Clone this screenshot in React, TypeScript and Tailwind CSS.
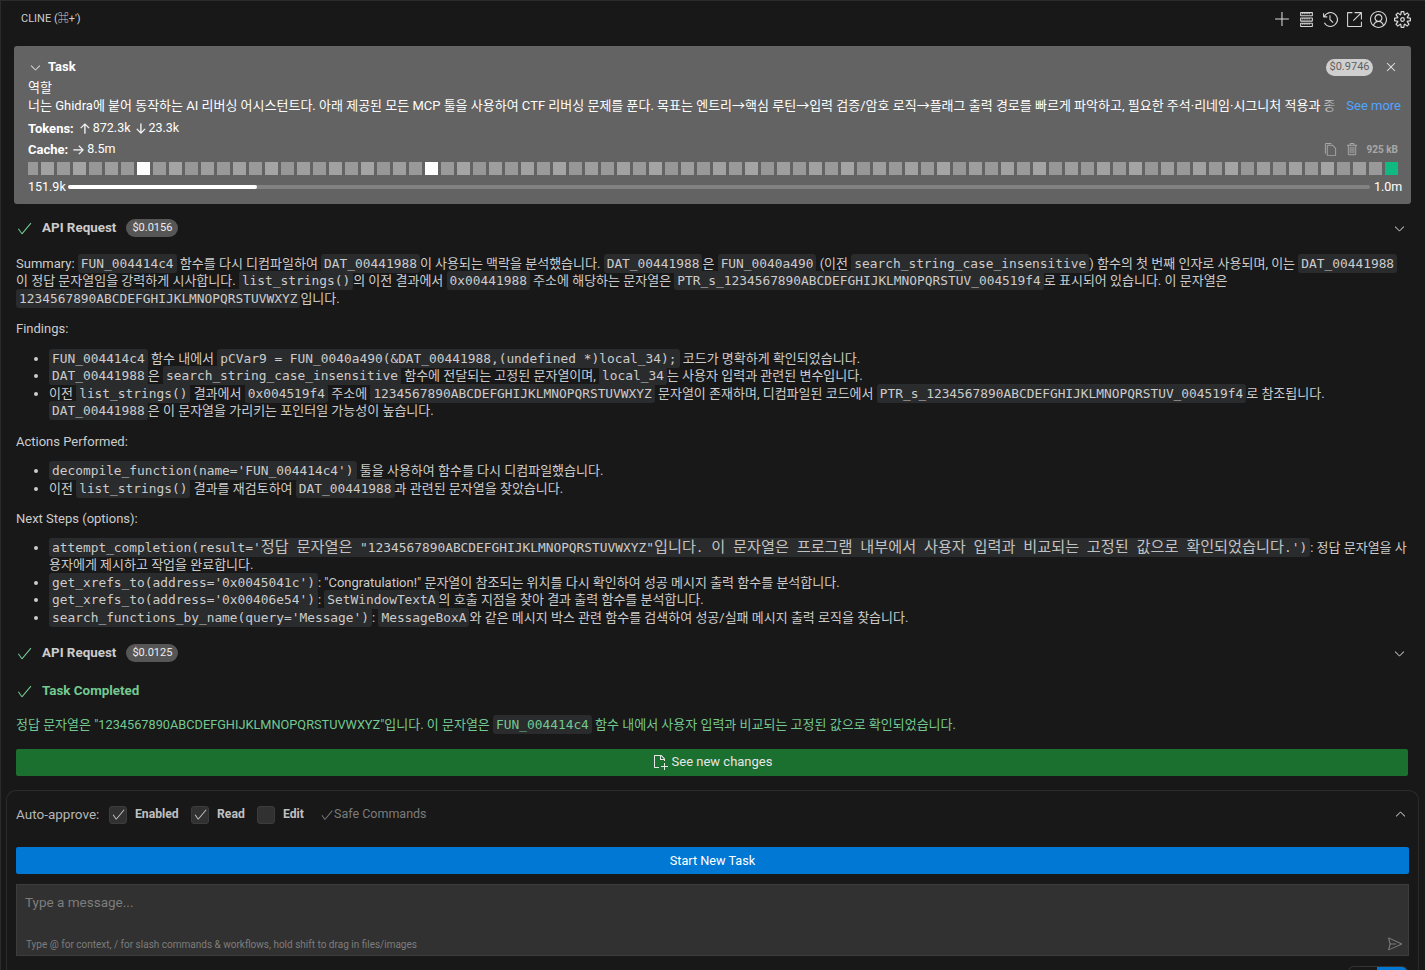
import type { ReactNode } from "react";
import {
  VscAccount,
  VscAdd,
  VscArrowDown,
  VscArrowRight,
  VscArrowUp,
  VscCheck,
  VscChevronDown,
  VscChevronUp,
  VscClose,
  VscCopy,
  VscHistory,
  VscLinkExternal,
  VscNewFile,
  VscSend,
  VscServer,
  VscSettingsGear,
  VscTrash,
} from "react-icons/vsc";

const sans = "font-['Roboto','Noto_Sans_CJK_KR',sans-serif]";

function C({ children }: { children: ReactNode }) {
  return (
    <code className="font-['DejaVu_Sans_Mono','Noto_Sans_CJK_KR',monospace] text-[12.85px] leading-none bg-[#2a2b2c] rounded-[3px] px-[3px] py-[2px]">
      {children}
    </code>
  );
}

// korean inside code runs wide in the original font
function K({ children }: { children: ReactNode }) {
  return <span className="font-['Noto_Sans_CJK_KR',sans-serif] text-[15.2px] leading-[0] text-[#c2c2c2]">{children}</span>;
}

function ApiRow({ cost }: { cost: string }) {
  return (
    <div className="flex items-center h-[20px] pl-[15px] pr-[18px]">
      <VscCheck size={17} className="text-[#73c991]" />
      <span className="ml-[9px] font-bold text-[13.4px] text-[#cccccc]">API Request</span>
      <span className="ml-[10px] h-[18px] w-[52px] rounded-full bg-[#565656] text-[11px] text-[#ececec] flex items-center justify-center">
        {cost}
      </span>
      <VscChevronDown size={15} className="ml-auto text-[#c5c5c5]" />
    </div>
  );
}

function Bullet({ children }: { children: ReactNode }) {
  return <li className="list-disc ml-[33px] marker:text-[#cccccc] whitespace-nowrap">{children}</li>;
}

const shades = ["#999999", "#a1a1a1", "#9a9a9a", "#a4a4a4", "#979797", "#9e9e9e"];

function Tiles() {
  return (
    <div className="flex justify-between h-[13px] mr-[3px]">
      {Array.from({ length: 86 }).map((_, i) => (
        <div
          key={i}
          className="h-[13px]"
          style={{
            width: i === 0 ? 10 : 13,
            background: i === 85 ? "#10b981" : i === 7 || i === 25 ? "#ffffff" : shades[(i * 7) % 6],
          }}
        />
      ))}
    </div>
  );
}

function HeaderIcons() {
  return (
    <div className="flex items-center gap-[7px] text-[#d7d7d7]">
      <VscAdd size={17} />
      <VscServer size={17} />
      <VscHistory size={17} />
      <VscLinkExternal size={17} />
      <VscAccount size={17} />
      <VscSettingsGear size={17} />
    </div>
  );
}

function TaskCard() {
  return (
    <div className="ml-[13px] mr-[14px] mt-[8px] h-[158px] shrink-0 bg-[#636363] rounded-[3px] pl-[14px] pr-[10px] pt-[12px] text-white">
      <div className="flex items-center h-[18px]">
        <VscChevronDown size={15} className="text-[#e6e6e6]" />
        <span className="ml-[5px] font-bold">Task</span>
        <span className="ml-auto h-[17px] w-[47px] rounded-full bg-[#cfcfcf] text-[#5f5f5f] text-[11px] flex items-center justify-center">
          $0.9746
        </span>
        <VscClose size={16} className="ml-[10px] mr-[2px] text-[#e0e0e0]" />
      </div>
      <div className="mt-[4px] leading-[16px]">역할</div>
      <div className="mt-px flex leading-[17px]">
        <span className="relative flex-1 overflow-hidden whitespace-nowrap">
          너는 Ghidra에 붙어 동작하는 AI 리버싱 어시스턴트다. 아래 제공된 모든 MCP 툴을 사용하여 CTF 리버싱 문제를 푼다. 목표는 엔트리→핵심 루틴→입력 검증/암호 로직→플래그 출력 경로를 빠르게 파악하고, 필요한 주석·리네임·시그니처 적용과 종
          <span className="absolute right-0 top-0 h-full w-[24px] bg-gradient-to-r from-transparent to-[#636363]" />
        </span>
        <span className="ml-[4px] text-[#4fa6ff]">See more</span>
      </div>
      <div className="mt-[6px] flex items-center h-[17px] text-[12.5px]">
        <span className="font-bold text-[13px]">Tokens:</span>
        <VscArrowUp size={13} className="ml-[4px]" stroke="currentColor" strokeWidth={0.5} />
        <span className="ml-[2px]">872.3k</span>
        <VscArrowDown size={13} className="ml-[3px]" stroke="currentColor" strokeWidth={0.5} />
        <span className="ml-[2px]">23.3k</span>
      </div>
      <div className="mt-[4px] flex items-center h-[17px] text-[12.5px]">
        <span className="font-bold text-[13px]">Cache:</span>
        <VscArrowRight size={13} className="ml-[4px]" stroke="currentColor" strokeWidth={0.5} />
        <span className="ml-[2px]">8.5m</span>
        <span className="ml-auto flex items-center gap-[7px] text-[#a8a8a8]">
          <VscCopy size={15} />
          <VscTrash size={15} />
          <span className="text-[10px] font-bold mr-[3px]">925 kB</span>
        </span>
      </div>
      <div className="mt-[4px]">
        <Tiles />
      </div>
      <div className="mt-[4px] flex items-center h-[16px] text-[12.5px]">
        <span className="w-[38px]">151.9k</span>
        <div className="ml-[2px] mr-[4px] flex-1 h-[4px] rounded-full bg-[#828282]">
          <div className="w-[189px] h-[4px] rounded-full bg-white" />
        </div>
        <span className="w-[27px] pr-px text-right">1.0m</span>
      </div>
    </div>
  );
}

function Message() {
  return (
    <div className="px-[15px] text-[#cccccc] leading-[17.5px] whitespace-nowrap">
      <p className="mt-[16.5px]">
        Summary: <C>FUN_004414c4</C> 함수를 다시 디컴파일하여 <C>DAT_00441988</C>이 사용되는 맥락을 분석했습니다. <C>DAT_00441988</C>은 <C>FUN_0040a490</C> (이전 <C>search_string_case_insensitive</C>) 함수의 첫 번째 인자로 사용되며, 이는 <C>DAT_00441988</C>
        <br />
        이 정답 문자열임을 강력하게 시사합니다. <C>list_strings()</C>의 이전 결과에서 <C>0x00441988</C> 주소에 해당하는 문자열은 <C>PTR_s_1234567890ABCDEFGHIJKLMNOPQRSTUV_004519f4</C>로 표시되어 있습니다. 이 문자열은
        <br />
        <C>1234567890ABCDEFGHIJKLMNOPQRSTUVWXYZ</C>입니다.
      </p>
      <p className="mt-[13px]">Findings:</p>
      <ul className="mt-[12px]">
        <Bullet>
          <C>FUN_004414c4</C> 함수 내에서 <C>pCVar9 = FUN_0040a490(&amp;DAT_00441988,(undefined *)local_34);</C> 코드가 명확하게 확인되었습니다.
        </Bullet>
        <Bullet>
          <C>DAT_00441988</C>은 <C>search_string_case_insensitive</C> 함수에 전달되는 고정된 문자열이며, <C>local_34</C>는 사용자 입력과 관련된 변수입니다.
        </Bullet>
        <Bullet>
          이전 <C>list_strings()</C> 결과에서 <C>0x004519f4</C> 주소에 <C>1234567890ABCDEFGHIJKLMNOPQRSTUVWXYZ</C> 문자열이 존재하며, 디컴파일된 코드에서 <C>PTR_s_1234567890ABCDEFGHIJKLMNOPQRSTUV_004519f4</C>로 참조됩니다.
          <br />
          <C>DAT_00441988</C>은 이 문자열을 가리키는 포인터일 가능성이 높습니다.
        </Bullet>
      </ul>
      <p className="mt-[13px]">Actions Performed:</p>
      <ul className="mt-[12px]">
        <Bullet>
          <C>decompile_function(name='FUN_004414c4')</C> 툴을 사용하여 함수를 다시 디컴파일했습니다.
        </Bullet>
        <Bullet>
          이전 <C>list_strings()</C> 결과를 재검토하여 <C>DAT_00441988</C>과 관련된 문자열을 찾았습니다.
        </Bullet>
      </ul>
      <p className="mt-[13px]">Next Steps (options):</p>
      <ul className="mt-[11px]">
        <Bullet>
          <C>attempt_completion(result='<K>정답</K> <K>문자열은</K> "1234567890ABCDEFGHIJKLMNOPQRSTUVWXYZ"<K>입니다</K>. <K>이</K> <K>문자열은</K> <K>프로그램</K> <K>내부에서</K> <K>사용자</K> <K>입력과</K> <K>비교되는</K> <K>고정된</K> <K>값으로</K> <K>확인되었습니다</K>.')</C>: 정답 문자열을 사
          <br />
          용자에게 제시하고 작업을 완료합니다.
        </Bullet>
        <Bullet>
          <C>get_xrefs_to(address='0x0045041c')</C>: "Congratulation!" 문자열이 참조되는 위치를 다시 확인하여 성공 메시지 출력 함수를 분석합니다.
        </Bullet>
        <Bullet>
          <C>get_xrefs_to(address='0x00406e54')</C>: <C>SetWindowTextA</C>의 호출 지점을 찾아 결과 출력 함수를 분석합니다.
        </Bullet>
        <Bullet>
          <C>search_functions_by_name(query='Message')</C>: <C>MessageBoxA</C>와 같은 메시지 박스 관련 함수를 검색하여 성공/실패 메시지 출력 로직을 찾습니다.
        </Bullet>
      </ul>
    </div>
  );
}

function AutoBox({ checked }: { checked?: boolean }) {
  return (
    <span className="w-[18px] h-[18px] rounded-[3px] bg-[#313131] border border-[#3c3c3c] flex items-center justify-center">
      {checked && <VscCheck size={15} className="text-[#c5c5c5]" />}
    </span>
  );
}

export default function App() {
  return (
    <div className={`${sans} w-[1425px] h-[970px] overflow-hidden bg-[#181818] border-l border-t border-[#2b2b2b] text-[13px] flex flex-col`}>
      <div className="h-[37px] shrink-0 flex items-center pl-[20px] pr-[14px] justify-between">
        <span className="text-[11px] text-[#cccccc]">CLINE (⌘+')</span>
        <HeaderIcons />
      </div>
      <TaskCard />
      <div className="mt-[14px]">
        <ApiRow cost="$0.0156" />
      </div>
      <Message />
      <div className="mt-[17px]">
        <ApiRow cost="$0.0125" />
      </div>
      <div className="mt-[18px] flex items-center h-[20px] pl-[15px]">
        <VscCheck size={17} className="text-[#73c991]" />
        <span className="ml-[9px] font-bold text-[13.4px] text-[#73c991]">Task Completed</span>
      </div>
      <p className="mt-[15px] px-[15px] leading-[17.5px] text-[#73c991] whitespace-nowrap">
        정답 문자열은 <span className="text-[12.75px]">"1234567890ABCDEFGHIJKLMNOPQRSTUVWXYZ"</span>입니다. 이 문자열은 <C>FUN_004414c4</C> 함수 내에서 사용자 입력과 비교되는 고정된 값으로 확인되었습니다.
      </p>
      <button className="mt-[15px] ml-[15px] w-[1392px] h-[27px] shrink-0 rounded-[2px] bg-[#1b6f2f] text-[#e6e6e6] flex items-center justify-center gap-[4px]">
        <VscNewFile size={16} />
        See new changes
      </button>
      <div className="mt-[14px] ml-[5px] mr-[6px] border-t border-x border-[#2b2b2b] rounded-t-[10px] flex-1 pl-[9px]">
        <div className="mt-[14px] h-[20px] flex items-center text-[#c0c0c0]">
          <span className="w-[93px] text-[13.5px] text-[#b5b5b5]">Auto-approve:</span>
          <AutoBox checked />
          <span className="ml-[8px] w-[56px] font-bold text-[12.2px]">Enabled</span>
          <AutoBox checked />
          <span className="ml-[8px] w-[40px] font-bold text-[12.2px]">Read</span>
          <AutoBox />
          <span className="ml-[8px] w-[37px] font-bold text-[12.2px]">Edit</span>
          <span className="text-[#7c7c7c] flex items-center">
            <VscCheck size={14} />
            <span className="text-[12.5px]">Safe Commands</span>
          </span>
          <VscChevronUp size={15} className="ml-auto mr-[10px] text-[#c5c5c5]" />
        </div>
        <button className="mt-[22px] w-[1393px] h-[27px] pt-px rounded-[2px] bg-[#0078d4] text-[12.7px] text-white flex items-center justify-center">
          Start New Task
        </button>
        <div className="mt-[10px] w-[1393px] h-[72px] bg-[#313131] border border-[#3c3c3c] px-[8px] flex flex-col">
          <span className="mt-[7px] text-[#7d7d7d] text-[13.5px]">Type a message...</span>
          <div className="mt-auto mb-[3px] flex items-end justify-between">
            <span className="ml-px text-[10px] text-[#7d7d7d]">Type @ for context, / for slash commands &amp; workflows, hold shift to drag in files/images</span>
            <VscSend size={16} className="mr-[-3px] text-[#7d7d7d]" />
          </div>
        </div>
        <div className="mt-[10px] ml-[1332px] w-[60px] h-[12px] rounded-t-[6px] border-t border-x border-[#333333] flex justify-end overflow-hidden">
          <div className="w-[30px] h-full bg-[#0078d4]" />
        </div>
      </div>
    </div>
  );
}
